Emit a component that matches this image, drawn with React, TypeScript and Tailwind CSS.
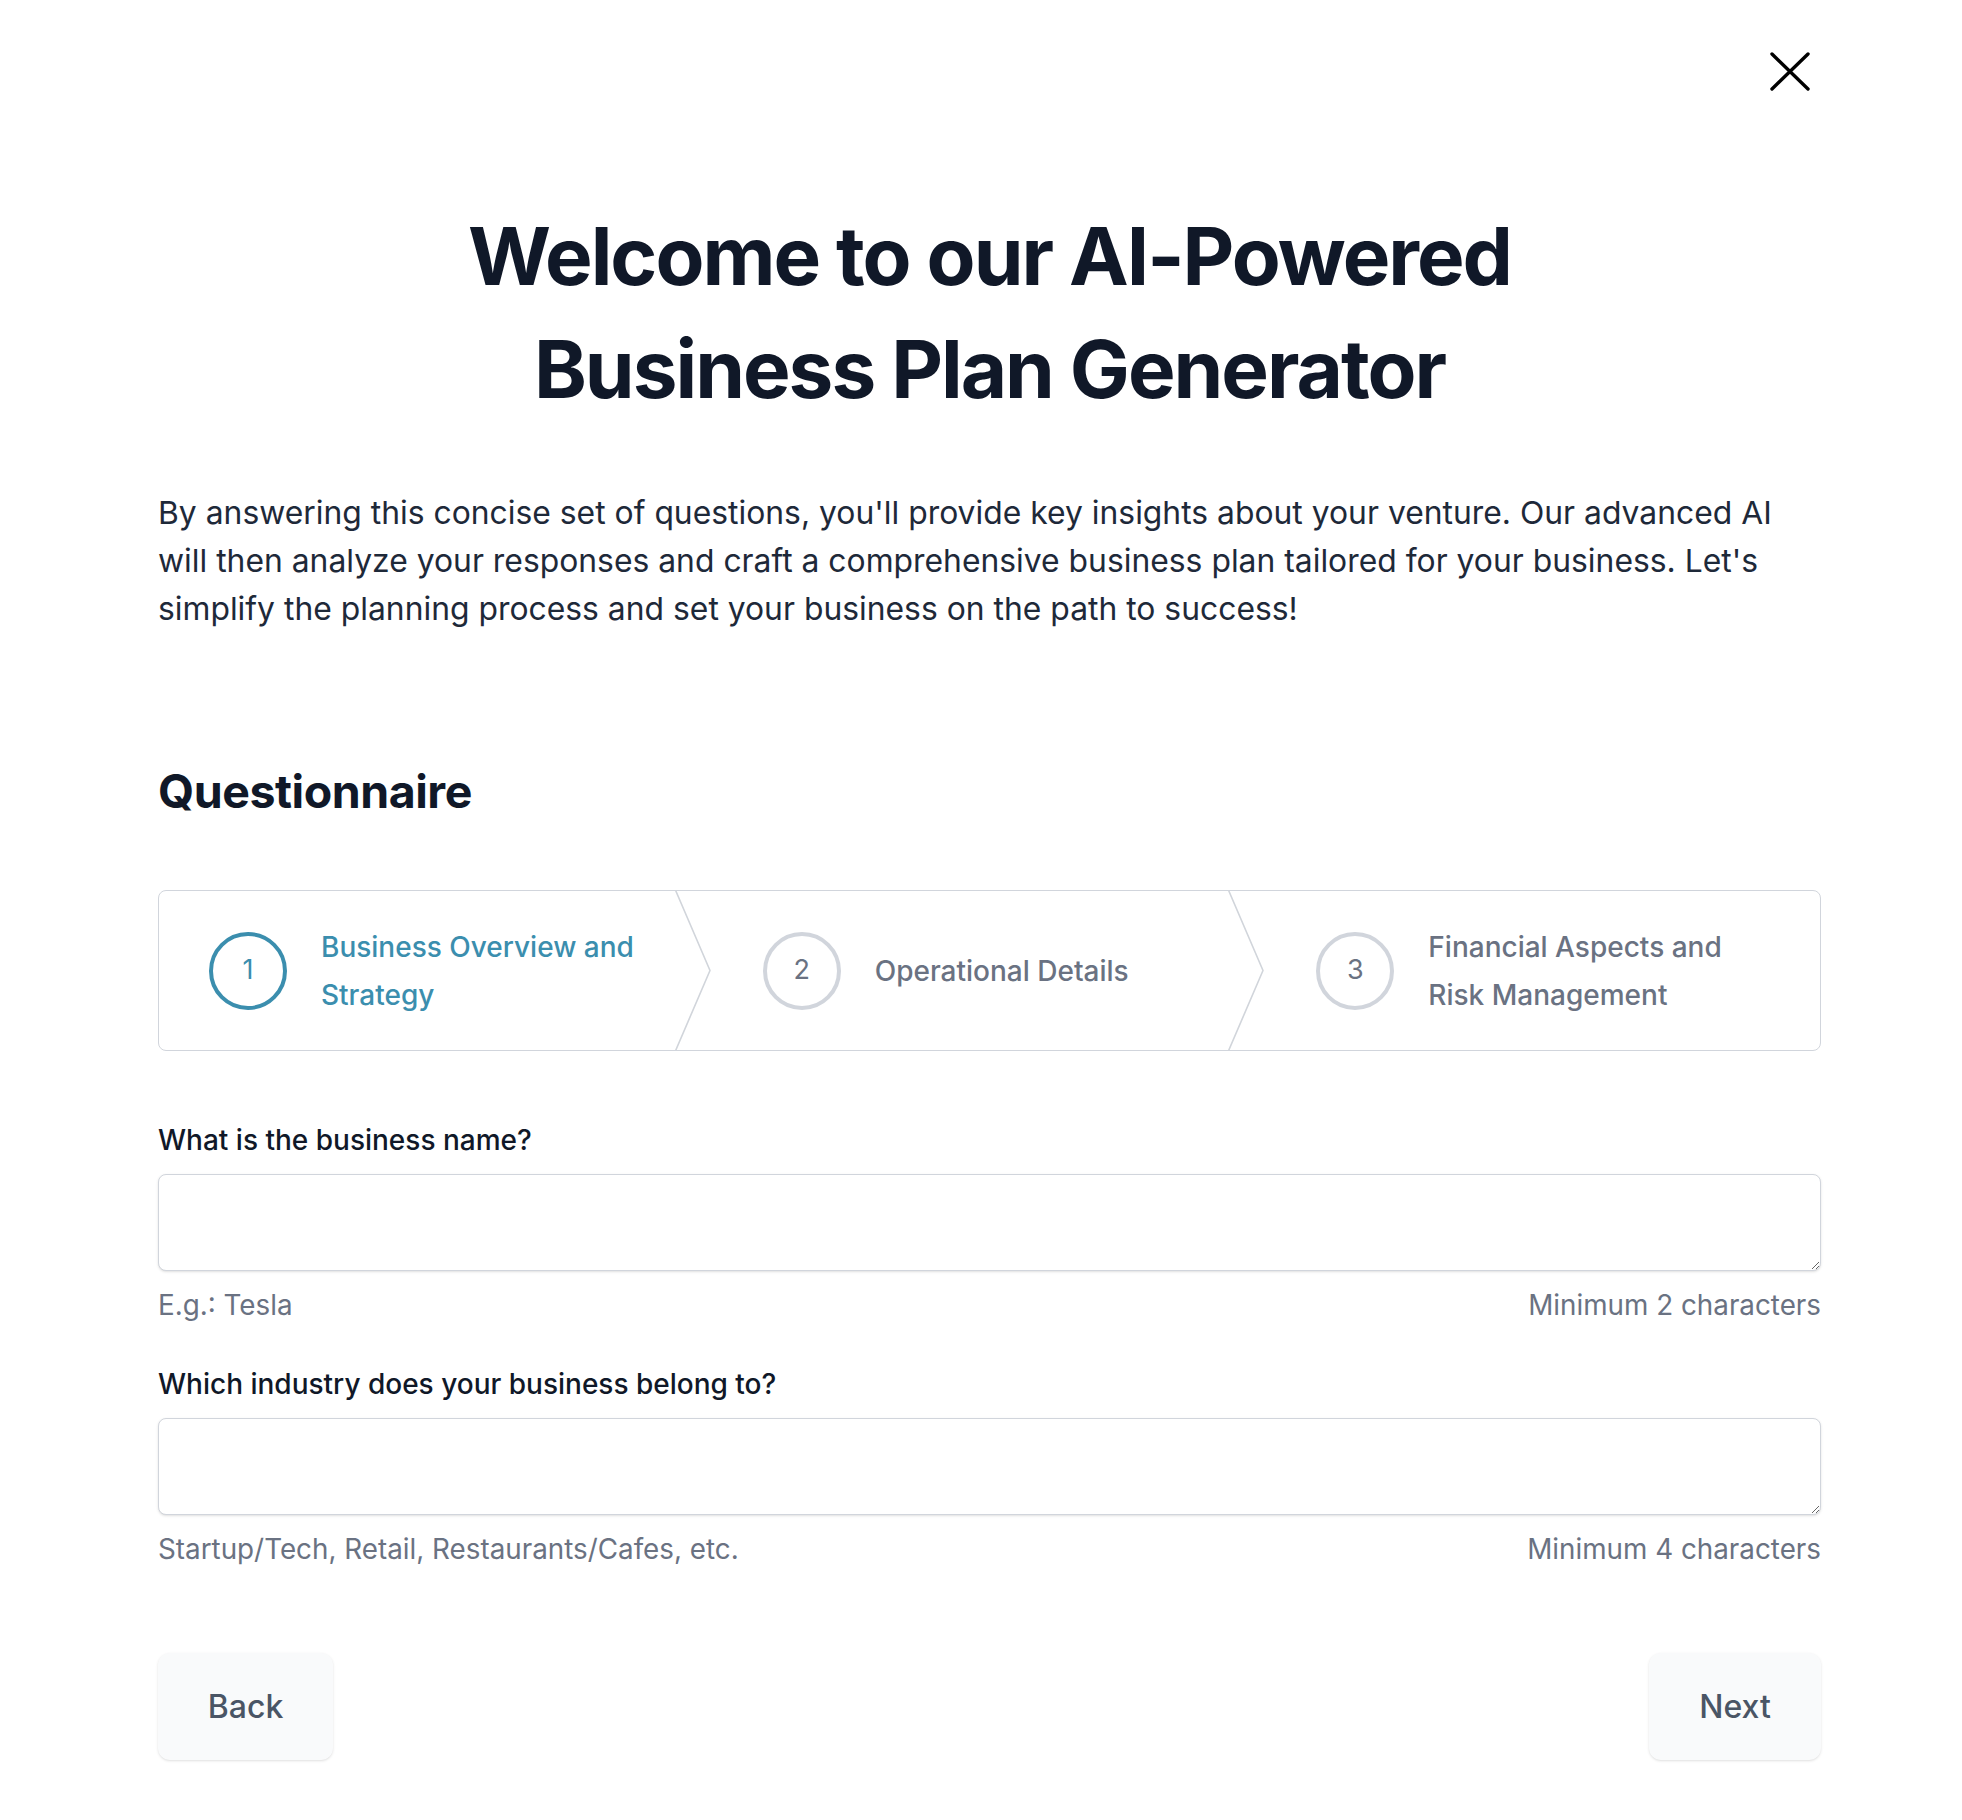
import type { ReactNode } from "react";

type Step = {
  id: number;
  name: ReactNode;
  current?: boolean;
};

const steps: Step[] = [
  { id: 1, name: "Business Overview and Strategy", current: true },
  { id: 2, name: "Operational Details" },
  { id: 3, name: "Financial Aspects and Risk Management" },
];

function CloseIcon() {
  return (
    <svg viewBox="0 0 40 40" className="h-[40px] w-[40px]" fill="none">
      <path
        d="M2 2L38 37M38 2L2 37"
        stroke="#000"
        strokeWidth="3.4"
        strokeLinecap="round"
      />
    </svg>
  );
}

function Chevron() {
  return (
    <div className="absolute right-[2px] top-0 h-full w-[36px]">
      <svg
        viewBox="0 0 36 161"
        preserveAspectRatio="none"
        className="h-full w-full"
        fill="none"
      >
        <path
          d="M0 -2L35 80.5L0 163"
          stroke="#d1d5db"
          strokeWidth="1.6"
          vectorEffect="non-scaling-stroke"
          strokeLinejoin="round"
        />
      </svg>
    </div>
  );
}

function Field({ label, hint, min }: { label: string; hint: string; min: string }) {
  return (
    <div className="flex flex-col">
      <label className="text-[28px] font-medium leading-[36px] text-gray-900">{label}</label>
      <textarea className="mt-[16px] h-[97px] w-full rounded-lg border border-gray-300 bg-white shadow-sm outline-none" />
      <div className="mt-[16px] flex justify-between text-[27.8px] leading-[36px] text-gray-500">
        <span>{hint}</span>
        <span>{min}</span>
      </div>
    </div>
  );
}

export default function App() {
  return (
    <div
      className="min-h-screen bg-white"
      style={{ fontFamily: "Inter, 'Noto Sans', sans-serif" }}
    >
      <div className="flex justify-end pr-[152px] pt-[52px]">
        <button className="flex items-center justify-center">
          <CloseIcon />
        </button>
      </div>

      <div className="ml-[158px] w-[1663px]">
        <h1 className="mt-[107px] text-center text-[80px] font-bold leading-[113px] tracking-[-0.025em] text-gray-900">
          Welcome to our AI-Powered
          <br />
          Business Plan Generator
        </h1>

        <p className="mt-[64px] text-[31.85px] leading-[48px] text-gray-800">
          By answering this concise set of questions, you'll provide key insights about your venture. Our
          advanced AI will then analyze your responses and craft a comprehensive business plan tailored for
          your business. Let's simplify the planning process and set your business on the path to success!
        </p>

        <h2 className="mt-[130px] text-[46.5px] font-bold leading-[56px] tracking-[-0.01em] text-gray-900">
          Questionnaire
        </h2>

        <nav className="mt-[71px]">
          <ol className="flex h-[161px] rounded-lg border border-gray-300">
            {steps.map((step, i) => (
              <li key={step.id} className="relative flex flex-1 items-center">
                <div className="flex items-center gap-[34px] pl-[50px] pr-[60px]">
                  <span
                    className={
                      step.current
                        ? "flex h-[78px] w-[78px] shrink-0 items-center justify-center rounded-full border-[4px] border-[#3b8eae] text-[27px] text-[#3b8eae]"
                        : "flex h-[78px] w-[78px] shrink-0 items-center justify-center rounded-full border-[4px] border-gray-300 text-[27px] text-gray-500"
                    }
                  >
                    {step.id}
                  </span>
                  <span
                    className={
                      step.current
                        ? "text-[28px] font-medium leading-[48px] text-[#3b8eae]"
                        : "text-[28px] font-medium leading-[48px] text-gray-500"
                    }
                  >
                    {step.name}
                  </span>
                </div>
                {i < steps.length - 1 && <Chevron />}
              </li>
            ))}
          </ol>
        </nav>

        <div className="mt-[71px] flex flex-col gap-[43px]">
          <Field label="What is the business name?" hint="E.g.: Tesla" min="Minimum 2 characters" />
          <Field
            label="Which industry does your business belong to?"
            hint="Startup/Tech, Retail, Restaurants/Cafes, etc."
            min="Minimum 4 characters"
          />
        </div>

        <div className="mt-[86px] flex justify-between pb-[60px]">
          <button className="h-[107px] w-[175px] rounded-xl bg-gray-50 text-[32px] font-medium text-gray-600 shadow-sm">
            Back
          </button>
          <button className="h-[107px] w-[172px] rounded-xl bg-gray-50 text-[32px] font-medium text-gray-600 shadow-sm">
            Next
          </button>
        </div>
      </div>
    </div>
  );
}
